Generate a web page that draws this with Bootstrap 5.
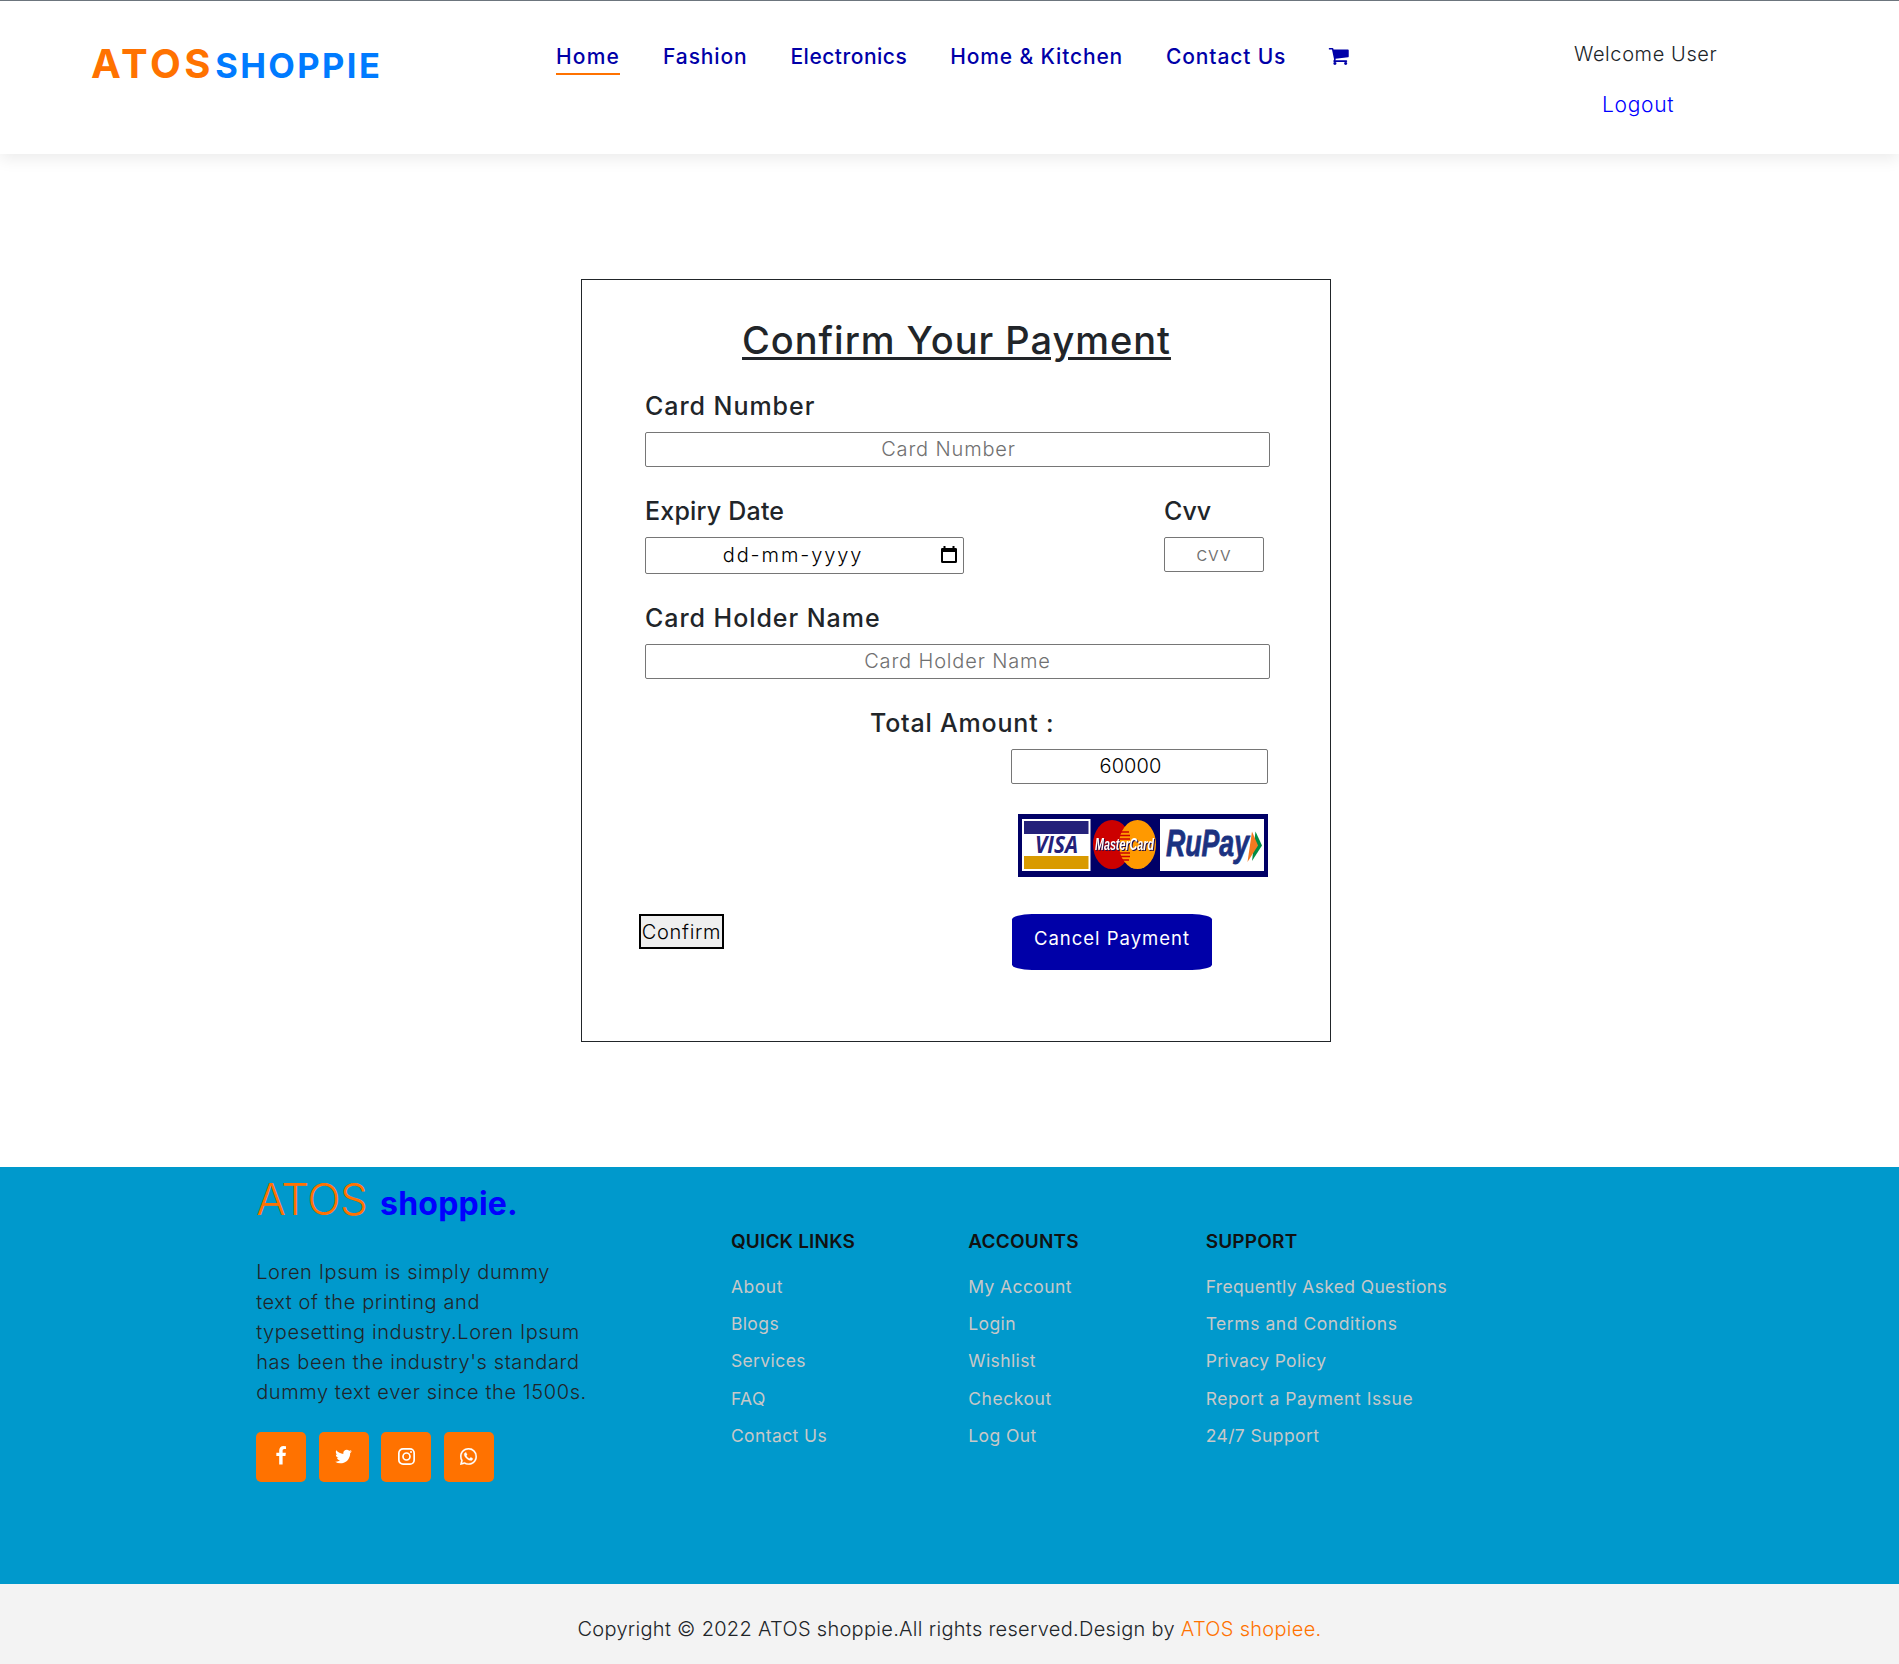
<!DOCTYPE html>
<html lang="en">
<head>
<meta charset="utf-8">
<meta name="viewport" content="width=device-width, initial-scale=1">
<title>ATOS Shoppie - Payment</title>
<link href="https://cdn.jsdelivr.net/npm/bootstrap@5.3.0/dist/css/bootstrap.min.css" rel="stylesheet">
<style>
  body { font-family: Inter, "Noto Sans", sans-serif; font-size: 20px; font-weight: 350; line-height: 30px; color: #212529; background: #fff; }
  a { text-decoration: none; }

  .site-header { height: 154px; border-top: 1px solid #6c757d; box-shadow: 0 5px 15px rgba(0,0,0,.08); padding-left: 91px; }
  .brand-area { width: 465px; padding-top: 33px; line-height: 60px; font-weight: 700; white-space: nowrap; }
  .brand-main { font-size: 40px; letter-spacing: 3.6px; color: #ff7200; }
  .brand-sub { font-size: 34.5px; letter-spacing: 2.400px; color: #007bff; margin-left: 1px; }
  .main-nav { width: 1018px; padding-top: 41px; gap: 43px; }
  .main-nav .nav-link { padding: 0 0 1px; font-size: 21px; font-weight: 450; letter-spacing: .85px; color: #0000a8; border-bottom: 2px solid transparent; white-space: nowrap; }
  .main-nav .nav-link.active { border-color: #ff7200; letter-spacing: 1.2px; }
  .main-nav .tight { letter-spacing: .5px; }
  .cart-icon { width: 21.5px; height: 21.5px; margin: 3px 0 0 -1px; }
  .user-area { padding-top: 38px; letter-spacing: .6px; }
  .logout-link { font-size: 21px; letter-spacing: .7px; color: #00f; margin: 21px 0 0 28px; }

  .payment-box { width: 750px; height: 763px; margin: 125px 0 125px 581px; border: 1px solid #212529; padding: 37px 60px 0 63px; }
  .payment-title { font-size: 38px; font-weight: 500; line-height: 46px; letter-spacing: .97px; margin: 0 0 28px -2px; text-underline-offset: 3px; text-decoration-thickness: 3px; }
  .field-label { display: block; font-size: 25px; font-weight: 500; line-height: 30px; letter-spacing: .95px; margin-bottom: 11px; }
  .field-row { margin-bottom: 29px; }
  .field-box { display: block; height: 35px; border: 1px solid #767676; border-radius: 2px; padding: 0 2px 1px; text-align: center; font-weight: 350; letter-spacing: .85px; color: #000; background: #fff; }
  .field-box::placeholder { color: #707070; opacity: 1; }
  .field-wide { width: 625px; }
  .field-spin { padding-right: 20px; }
  .field-date { width: 319px; height: 37px; padding-right: 25px; padding-bottom: 2px; letter-spacing: 1.900px; }
  .field-cvv { width: 100px; }
  .cvv-group { width: 106px; }
  .calendar-icon { right: 6px; top: 8px; }
  .amount-label { margin-left: 225px; letter-spacing: .8px; }
  .field-amount { width: 257px; margin: 0 2px 30px auto; letter-spacing: .1px; }
  .card-brands { display: block; margin: 0 2px 37px auto; }
  .brand-word { filter: drop-shadow(1px 1px 0 #24104a); }
  .actions { margin-left: -6px; }
  .confirm-btn { height: 35px; width: 85px; border: 2px solid #000; background: #efefef; color: #000; padding: 1px 0 0; font-weight: 350; letter-spacing: .7px; line-height: 30px; white-space: nowrap; }
  .cancel-btn { width: 200px; height: 56px; margin-right: 58px; border-radius: 10% / 10%; background: #0000a8; color: #fff; font-size: 18.5px; font-weight: 400; letter-spacing: 1px; line-height: 48px; }

  .site-footer { height: 417px; background: #0099cc; }
  .footer-row { --bs-gutter-x: 37.5px; }
  .footer-brand { height: 64px; line-height: 64px; margin-bottom: 26px; white-space: nowrap; }
  .footer-brand-main { font-size: 44px; letter-spacing: -.7px; color: #ff7200; }
  .footer-brand-sub { font-size: 32px; font-weight: 700; letter-spacing: .2px; color: #00f; margin-left: 13px; }
  .about-text { margin-bottom: 25px; letter-spacing: .6px; white-space: nowrap; }
  .social-row { gap: 12.5px; }
  .social-btn { width: 50px; height: 50px; border-radius: 5px; background: #ff7200; padding-bottom: 2px; }
  .links-col { padding-top: 60px; white-space: nowrap; }
  .links-col h6 { font-size: 19px; font-weight: 600; line-height: 30px; letter-spacing: .2px; color: #111; margin-bottom: 10.5px; }
  .links-col a { display: block; font-size: 17.5px; font-weight: 400; line-height: 37.4px; letter-spacing: .4px; color: #c8c8c8; }
  .links-col .long-link { letter-spacing: .35px; }
  .links-col .open-link { letter-spacing: .55px; }
  .copyright-bar { height: 80px; padding-top: 30px; background: #f3f3f3; letter-spacing: .3px; }
  .copyright-bar a { color: #ff7200; }
</style>
</head>
<body>
<header class="site-header d-flex align-items-start">
  <div class="brand-area"><span class="brand-main">ATOS</span><span class="brand-sub">SHOPPIE</span></div>
  <nav class="main-nav nav flex-nowrap">
    <a class="nav-link active" href="#">Home</a>
    <a class="nav-link" href="#">Fashion</a>
    <a class="nav-link tight" href="#">Electronics</a>
    <a class="nav-link" href="#">Home &amp; Kitchen</a>
    <a class="nav-link" href="#">Contact Us</a>
    <a href="#" class="d-flex" aria-label="Cart"><svg class="cart-icon" viewBox="0 0 1792 1792" fill="#0000a8"><path d="M704 1536q0 52-38 90t-90 38-90-38-38-90 38-90 90-38 90 38 38 90zm896 0q0 52-38 90t-90 38-90-38-38-90 38-90 90-38 90 38 38 90zm128-1088v512q0 24-16.500 42.500t-40.500 21.500l-1044 122q13 60 13 70 0 16-24 64h920q26 0 45 19t19 45-19 45-45 19h-1024q-26 0-45-19t-19-45q0-11 8-31.500t16-36 21.500-40 15.500-29.500l-177-823h-204q-26 0-45-19t-19-45 19-45 45-19h256q16 0 28.500 6.500t19.500 15.500 13 24.500 8 26 5.500 29.500 4.500 26h1201q26 0 45 19t19 45z"/></svg></a>
  </nav>
  <div class="user-area d-flex flex-column">
    <span>Welcome User</span>
    <a class="logout-link" href="#">Logout</a>
  </div>
</header>

<main>
  <form class="payment-box">
    <h2 class="payment-title text-center text-decoration-underline">Confirm Your Payment</h2>
    <div class="field-row">
      <label class="field-label" for="cardNumber">Card Number</label>
      <input id="cardNumber" class="field-box field-wide field-spin" type="text" placeholder="Card Number">
    </div>
    <div class="field-row d-flex justify-content-between align-items-start">
      <div>
        <label class="field-label" for="expiry" style="letter-spacing:.2px">Expiry Date</label>
        <div class="position-relative">
          <input id="expiry" class="field-box field-date" type="text" value="dd-mm-yyyy">
          <svg class="calendar-icon position-absolute" width="18" height="19" viewBox="0 0 18 19"><path d="M3.500 1h2v2h7V1h2v2h1.200Q17 3 17 4.300v12.200q0 1.500-1.500 1.500h-13Q1 18 1 16.500V4.300Q1 3 2.300 3h1.200zM3 7v9h12V7z" fill="#000" fill-rule="evenodd"/></svg>
        </div>
      </div>
      <div class="cvv-group">
        <label class="field-label" for="cvv" style="letter-spacing:0">Cvv</label>
        <input id="cvv" class="field-box field-cvv" type="text" placeholder="cvv">
      </div>
    </div>
    <div class="field-row">
      <label class="field-label" for="holder">Card Holder Name</label>
      <input id="holder" class="field-box field-wide" type="text" placeholder="Card Holder Name">
    </div>
    <label class="field-label amount-label" for="amount">Total Amount :</label>
    <input id="amount" class="field-box field-amount field-spin" type="text" value="60000">
    <svg class="card-brands" width="250" height="63" viewBox="0 0 250 63" font-family="'Open Sans','Noto Sans',sans-serif" font-weight="700" font-style="italic">
      <rect width="250" height="63" fill="#000066"/>
      <rect x="4" y="5" width="68.500" height="52" fill="#fff"/>
      <rect x="6" y="7" width="64.500" height="13" fill="#24217a"/>
      <rect x="6" y="42" width="64.500" height="13" fill="#d99a00"/>
      <text x="17" y="39" font-size="24" textLength="43" lengthAdjust="spacingAndGlyphs" fill="#24217a">VISA</text>
      <ellipse cx="94" cy="30.500" rx="19" ry="24.500" fill="#cc0000"/>
      <ellipse cx="119.500" cy="30.500" rx="18.500" ry="24.500" fill="#ff9900"/>
      <path d="M103 18h8M102 21.500h10M101 25h11M101 39h11M102 42.500h10M103 46h8" stroke="#cc0000" stroke-width="1.700"/>
      <text class="brand-word" x="77" y="36" font-family="'Liberation Sans',sans-serif" font-size="16.500" textLength="59" lengthAdjust="spacingAndGlyphs" fill="#fff">MasterCard</text>
      <rect x="142" y="5" width="104" height="52" fill="#fff"/>
      <text x="148" y="42" font-family="'Liberation Sans',sans-serif" font-size="36" textLength="83" lengthAdjust="spacingAndGlyphs" fill="#1b3281" stroke="#1b3281" stroke-width=".8">RuPay</text>
      <path d="M237.500 17.500L244 31.500 234 47z" fill="#008c44"/>
      <path d="M234 17.500L240 31.500 229.500 48z" fill="#f47920"/>
    </svg>
    <div class="actions d-flex justify-content-between align-items-start">
      <button type="button" class="confirm-btn">Confirm</button>
      <a class="cancel-btn text-center" href="#">Cancel Payment</a>
    </div>
  </form>
</main>

<footer>
  <div class="site-footer">
    <div class="row footer-row w-75 mx-auto">
      <div class="col-4">
        <div class="footer-brand"><span class="footer-brand-main">ATOS</span><span class="footer-brand-sub">shoppie.</span></div>
        <p class="about-text">Loren Ipsum is simply dummy<br>text of the printing and<br>typesetting industry.Loren Ipsum<br>has been the industry's standard<br>dummy text ever since the 1500s.</p>
        <div class="social-row d-flex">
          <a class="social-btn d-flex align-items-center justify-content-center" href="#" aria-label="Facebook"><svg width="20" height="20" viewBox="0 0 1792 1792" fill="#fff"><path d="M1343 12v264h-157q-86 0-116 36t-30 108v189h293l-39 296h-254v759h-306v-759h-255v-296h255v-218q0-186 104-288.500t277-102.500q147 0 228 12z"/></svg></a>
          <a class="social-btn d-flex align-items-center justify-content-center" href="#" aria-label="Twitter"><svg width="19" height="19" viewBox="0 0 1792 1792" fill="#fff"><path d="M1684 408q-67 98-162 167 1 14 1 42 0 130-38 259.500t-115.500 248.500-184.500 210.500-258 146-323 54.500q-271 0-496-145 35 4 78 4 225 0 401-138-105-2-188-64.500t-114-159.500q33 5 61 5 43 0 85-11-112-23-185.500-111.500t-73.500-205.500v-4q68 38 146 41-66-44-105-115t-39-154q0-88 44-163 121 149 294.500 238.500t371.500 99.500q-8-38-8-74 0-134 94.500-228.500t228.500-94.500q140 0 236 102 109-21 205-78-37 115-142 178 93-10 186-50z"/></svg></a>
          <a class="social-btn d-flex align-items-center justify-content-center" href="#" aria-label="Instagram"><svg width="17" height="17" viewBox="0 0 17 17" fill="none" stroke="#fff" stroke-width="1.700"><rect x=".85" y=".85" width="15.300" height="15.300" rx="4.200"/><circle cx="8.500" cy="8.500" r="3.500"/><circle cx="13" cy="4" r="1" fill="#fff" stroke="none"/></svg></a>
          <a class="social-btn d-flex align-items-center justify-content-center" href="#" aria-label="WhatsApp"><svg width="17" height="17" viewBox="0 0 16 16" fill="#fff" stroke="#fff" stroke-width=".25"><path d="M13.601 2.326A7.854 7.854 0 0 0 7.994 0C3.627 0 .068 3.558.064 7.926c0 1.399.366 2.760 1.057 3.965L0 16l4.204-1.102a7.933 7.933 0 0 0 3.790.965h.004c4.368 0 7.926-3.558 7.930-7.930A7.898 7.898 0 0 0 13.600 2.326zM7.994 14.521a6.573 6.573 0 0 1-3.356-.920l-.240-.144-2.494.654.666-2.433-.156-.251a6.560 6.560 0 0 1-1.007-3.505c0-3.626 2.957-6.584 6.591-6.584a6.560 6.560 0 0 1 4.660 1.931 6.557 6.557 0 0 1 1.928 4.660c-.004 3.639-2.961 6.592-6.592 6.592zm3.615-4.934c-.197-.099-1.170-.578-1.353-.646-.182-.065-.315-.099-.445.099-.133.197-.513.646-.627.775-.114.133-.232.148-.430.050-.197-.100-.836-.308-1.592-.985-.590-.525-.985-1.175-1.103-1.372-.114-.198-.011-.304.088-.403.087-.088.197-.232.296-.346.100-.114.133-.198.198-.330.065-.134.034-.248-.015-.347-.050-.099-.445-1.076-.612-1.470-.160-.389-.323-.335-.445-.340-.114-.007-.247-.007-.380-.007a.729.729 0 0 0-.529.247c-.182.198-.691.677-.691 1.654 0 .977.710 1.916.810 2.049.098.133 1.394 2.132 3.383 2.992.470.205.840.326 1.129.418.475.152.904.129 1.246.080.380-.058 1.171-.480 1.338-.943.164-.464.164-.860.114-.943-.049-.084-.182-.133-.380-.232z"/></svg></a>
        </div>
      </div>
      <div class="col-2 links-col">
        <h6>QUICK LINKS</h6>
        <a class="open-link" href="#">About</a><a href="#">Blogs</a><a href="#">Services</a><a href="#">FAQ</a><a href="#">Contact Us</a>
      </div>
      <div class="col-2 links-col">
        <h6>ACCOUNTS</h6>
        <a href="#">My Account</a><a href="#">Login</a><a href="#">Wishlist</a><a class="open-link" href="#">Checkout</a><a href="#">Log Out</a>
      </div>
      <div class="col-4 links-col">
        <h6>SUPPORT</h6>
        <a class="long-link" href="#">Frequently Asked Questions</a><a class="open-link" href="#">Terms and Conditions</a><a class="long-link" href="#">Privacy Policy</a><a class="open-link" href="#">Report a Payment Issue</a><a href="#">24/7 Support</a>
      </div>
    </div>
  </div>
  <div class="copyright-bar text-center">Copyright © 2022 ATOS shoppie.All rights reserved.Design by <a href="#">ATOS shopiee.</a></div>
</footer>
<script src="https://cdn.jsdelivr.net/npm/bootstrap@5.3.0/dist/js/bootstrap.bundle.min.js"></script>
</body>
</html>
